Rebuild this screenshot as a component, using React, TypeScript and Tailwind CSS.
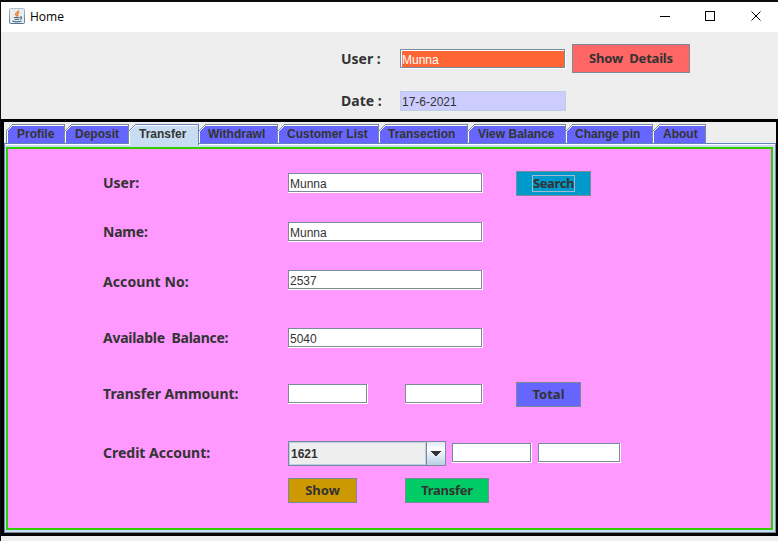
import type { ReactNode } from "react";

const tahoma = "font-['Noto_Sans',sans-serif] font-bold text-[#333333] whitespace-pre";
const arial = "font-['Liberation_Sans',Arial,sans-serif] text-[12px] text-[#333333] whitespace-pre";

const tabs = [
  { name: "Profile", width: "w-[59px]", first: true, inset: "pl-[9px]" },
  { name: "Deposit", width: "w-[64px]", inset: "pl-[9px]" },
  { name: "Transfer", width: "w-[70px]", active: true, inset: "pl-[9px]" },
  { name: "Withdrawl", width: "w-[79px]", inset: "pl-[8px]" },
  { name: "Customer List", width: "w-[101px]", inset: "pl-[8px]" },
  { name: "Transection", width: "w-[89px]", inset: "pl-[8px]" },
  { name: "View Balance", width: "w-[98px]", inset: "pl-[9px]" },
  { name: "Change pin", width: "w-[87px]", inset: "pl-[8px]" },
  { name: "About", width: "w-[53px]", inset: "pl-[9px]" },
];

interface TabProps {
  name: string;
  width: string;
  inset: string;
  active?: boolean;
  first?: boolean;
}

function Tab({ name, width, inset, active, first }: TabProps) {
  const line = active ? "#6382bf" : "#7a8a99";
  const fill = active ? "bg-[#c8ddf2]" : "bg-[#6666ff]";
  const edge = active ? "border-[#6382bf]" : "border-[#7a8a99]";
  return (
    <div className={`relative shrink-0 border-t border-r ${first ? "border-l" : ""} ${edge} ${width} ${active ? "h-[21px]" : "h-[19px]"}`}>
      <div className={`h-full border-t border-l border-white ${fill} ${inset} pt-px leading-[14px] font-bold ${arial}`}>
        {name}
      </div>
      <svg className={`absolute -top-px ${first ? "-left-px" : "left-0"}`} width="7" height="7" shapeRendering="crispEdges">
        <path d="M0 0H7L0 7Z" fill="#eeeeee" />
        <path d="M6 0h1v1h-1zM5 1h1v1h-1zM4 2h1v1h-1zM3 3h1v1h-1zM2 4h1v1h-1zM1 5h1v1h-1zM0 6h1v1h-1z" fill={line} />
        <path d="M6 1h1v1h-1zM5 2h1v1h-1zM4 3h1v1h-1zM3 4h1v1h-1zM2 5h1v1h-1zM1 6h1v1h-1z" fill="#ffffff" />
      </svg>
    </div>
  );
}

function Field({ className = "", value = "", fill = "bg-white", text = "" }: { className?: string; value?: string; fill?: string; text?: string }) {
  return (
    <div className={`h-[20px] shrink-0 border-r border-b border-white ${className}`}>
      <div className="h-full border border-[#7a8a99] bg-white pt-px pl-px">
        <div className={`h-full pt-[2px] leading-[14px] ${fill} ${arial} ${text}`}>{value}</div>
      </div>
    </div>
  );
}

function Button({ className, children }: { className: string; children: ReactNode }) {
  return (
    <button className={`flex shrink-0 items-center justify-center border border-[#7a8a99] pb-[2px] text-[13px] leading-[16px] ${tahoma} ${className}`}>
      {children}
    </button>
  );
}

function Label({ className = "", children }: { className?: string; children: ReactNode }) {
  return <div className={`w-[185px] shrink-0 text-[14px] leading-[20px] ${tahoma} ${className}`}>{children}</div>;
}

function JavaIcon() {
  return (
    <svg width="16" height="16" viewBox="0 0 16 16">
      <defs>
        <linearGradient id="cup" x1="0" y1="0" x2="0" y2="1">
          <stop offset="0" stopColor="#b4c0ca" />
          <stop offset="1" stopColor="#55738f" />
        </linearGradient>
      </defs>
      <rect x="0.5" y="0.5" width="15" height="15" rx="1" fill="#e9edf1" stroke="url(#cup)" />
      <path d="M9.7 2.2C9.8 4 6.5 4.6 6.6 6.2C6.7 7.2 7.8 7.7 7.9 8.6M10.3 4.7C8.8 5.2 8 6 8.6 6.8C9 7.4 8.8 8 8.4 8.4" fill="none" stroke="#ee7b22" strokeWidth="1.3" />
      <path d="M4.8 9.5H10.6M11 9C13.4 8.6 12.8 10.8 10.9 11.2M5.6 11.4H10M3.4 13.1C6 13.9 10 13.9 12.6 13" fill="none" stroke="#4d7390" strokeWidth="1.2" />
    </svg>
  );
}

function TitleBar() {
  return (
    <div className="flex h-[30px] bg-white pl-[8px]">
      <div className="pt-[6px]"><JavaIcon /></div>
      <div className="ml-[5px] pt-[6px] font-['Open_Sans',sans-serif] text-[12px] leading-[18px] text-black">Home</div>
      <svg className="ml-auto" width="138" height="30" fill="none" stroke="#000000" shapeRendering="crispEdges">
        <path d="M20 14.5h10M65.5 9.5h9v9h-9z" />
        <path d="M111.5 9.5l9 9M120.5 9.5l-9 9" shapeRendering="auto" />
      </svg>
    </div>
  );
}

export default function App() {
  return (
    <div className="flex h-[541px] w-[778px] flex-col overflow-hidden border-t-2 border-l border-[#100c0e] bg-[#eeeeee]">
      <TitleBar />
      <header className="h-[87px] pl-[340px]">
        <div className="flex pt-[12px]">
          <div className={`w-[59px] pt-[5px] text-[14px] leading-[20px] ${tahoma}`}>User :</div>
          <Field className="mt-[5px] w-[166px]" value="Munna" fill="bg-[#ff6633]" text="text-white!" />
          <Button className="ml-[6px] h-[29px] w-[118px] bg-[#ff6666] tracking-[-0.2px]">Show  Details</Button>
        </div>
        <div className="mt-[18px] flex">
          <div className={`w-[59px] text-[14px] leading-[20px] ${tahoma}`}>Date :</div>
          <div className={`h-[20px] w-[166px] border border-[#b8cfe5] bg-[#ccccff] pt-[3px] pl-px leading-[14px] ${arial}`}>17-6-2021</div>
        </div>
      </header>
      <main className="-ml-px flex h-[417px] flex-col border-t-[3px] border-r-2 border-b-[3px] border-l-4 border-black bg-[#eeeeee]">
        <nav className="z-10 flex h-[21px] pt-[2px] pl-[2px]">
          {tabs.map((tab) => (
            <Tab key={tab.name} {...tab} />
          ))}
        </nav>
        <div className="flex-1 border border-t-[#6382bf] border-r-[#7a8a99] border-b-[#7a8a99] border-l-[#6382bf]">
          <div className="h-full border-t border-white bg-[#c8ddf2] pt-[2px] pr-[2px] pb-[2px] pl-px">
            <section className="h-full border-2 border-[#33cc00] bg-[#ff99ff] pt-[22px] pl-[95px]">
              <div className="flex h-[25px]">
                <Label className="pt-[2px]">User:</Label>
                <Field className="mt-[2px] w-[195px]" value="Munna" />
                <Button className="ml-[33px] h-[25px] w-[75px] bg-[#0099cc] tracking-[-0.4px]">
                  <span className="mt-[2px] flex h-[17px] w-[43px] items-center justify-center border border-[#a3b8cc] pb-[2px]">Search</span>
                </Button>
              </div>
              <div className="mt-[26px] flex h-[20px]">
                <Label className="tracking-[-0.2px]">Name:</Label>
                <Field className="w-[195px]" value="Munna" />
              </div>
              <div className="mt-[28px] flex h-[20px]">
                <Label className="pt-[2px] tracking-[0.08px]">Account No:</Label>
                <Field className="w-[195px]" value="2537" />
              </div>
              <div className="mt-[38px] flex h-[20px]">
                <Label className="tracking-[-0.27px]">Available  Balance:</Label>
                <Field className="w-[195px]" value="5040" />
              </div>
              <div className="mt-[34px] flex h-[25px]">
                <Label className="pt-[2px]">Transfer Ammount:</Label>
                <Field className="mt-[2px] w-[80px]" />
                <Field className="mt-[2px] ml-[37px] w-[78px]" />
                <Button className="ml-[33px] h-[25px] w-[65px] bg-[#6666ff]">Total</Button>
              </div>
              <div className="mt-[34px] flex h-[25px]">
                <Label className="pt-[2px]">Credit Account:</Label>
                <div className="flex w-[158px] border border-[#7a8a99]">
                  <div className={`flex-1 border border-[#b8cfe5] bg-[#eeeeee] pt-[4px] pl-px leading-[14px] font-bold ${arial}`}>1621</div>
                  <div className="flex w-[19px] items-center justify-center border-l border-[#7a8a99] bg-linear-to-b from-[#dde8f3] via-white via-30% to-[#b8cfe5]">
                    <svg width="10" height="5" shapeRendering="crispEdges">
                      <path d="M0 0h10v1h-10zM1 1h8v1h-8zM2 2h6v1h-6zM3 3h4v1h-4zM4 4h2v1h-2z" fill="#333333" />
                    </svg>
                  </div>
                </div>
                <Field className="mt-[2px] ml-[6px] w-[80px]" />
                <Field className="mt-[2px] ml-[6px] w-[83px]" />
              </div>
              <div className="mt-[12px] ml-[185px] flex gap-[48px]">
                <Button className="h-[25px] w-[69px] bg-[#cc9900]">Show</Button>
                <Button className="h-[25px] w-[84px] bg-[#00cc66] tracking-[-0.3px]">Transfer</Button>
              </div>
            </section>
          </div>
        </div>
      </main>
    </div>
  );
}
